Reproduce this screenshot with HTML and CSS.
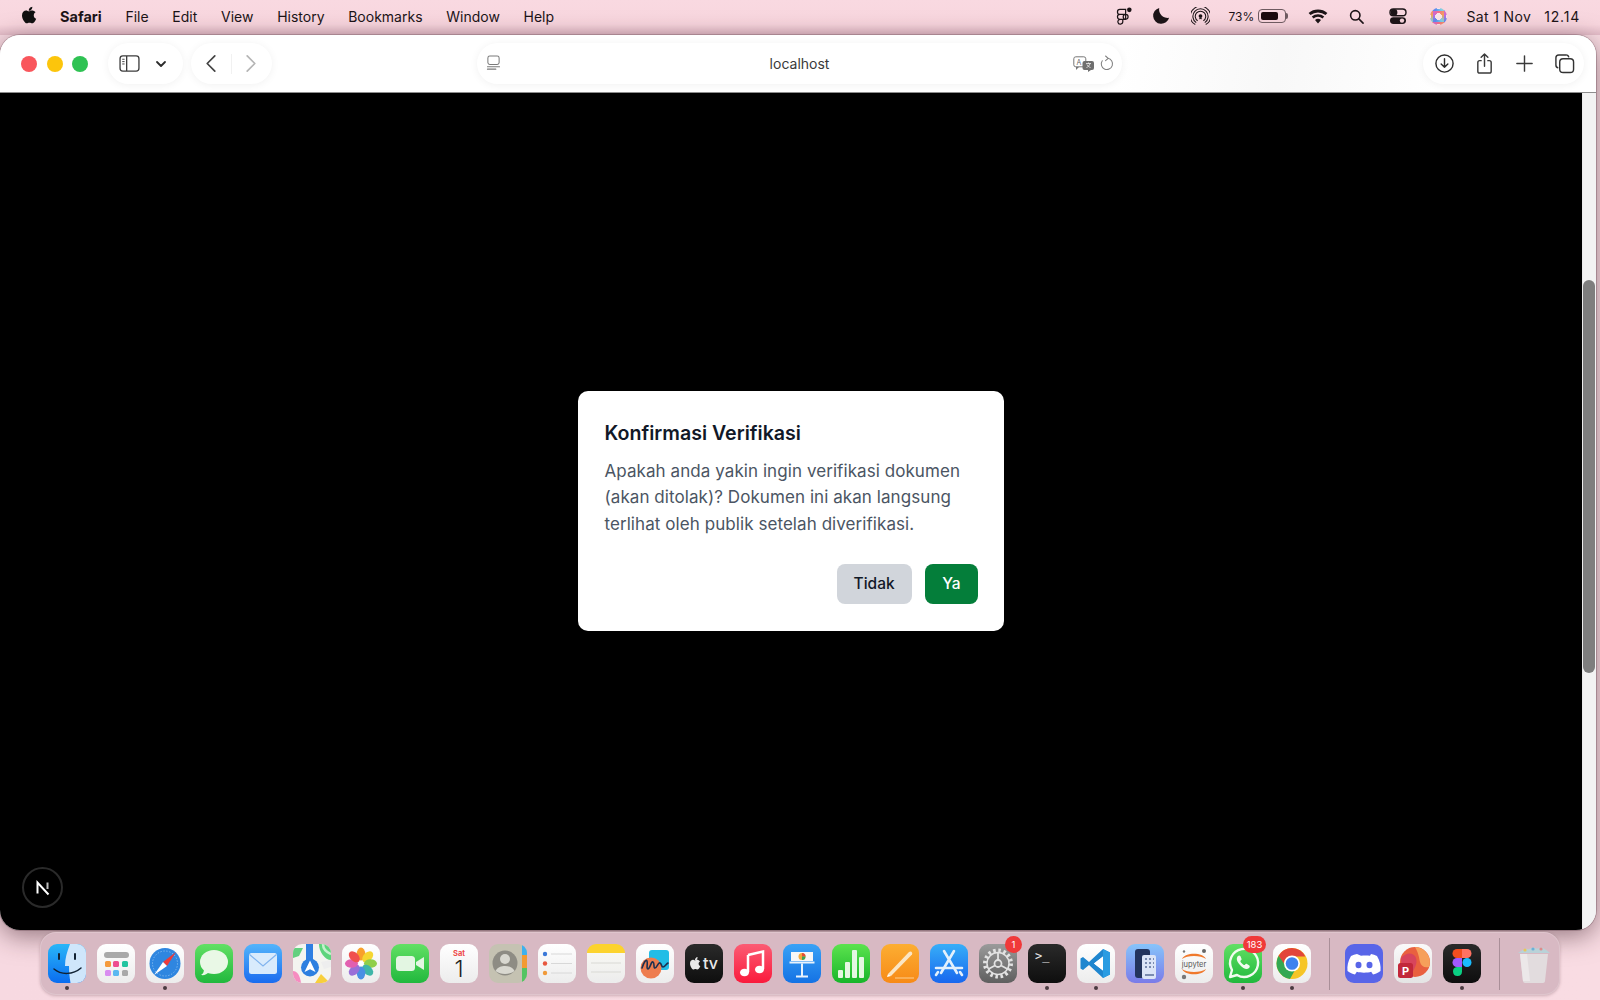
FILE: index.html
```html
<!DOCTYPE html>
<html lang="id">
<head>
    <meta charset="UTF-8">
    <title>localhost</title>
    <link rel="stylesheet" href="styles.css">
</head>
<body>
    <!-- menu bar -->
    <header class="menubar">
        <svg class="apple" viewBox="0 0 18 20"><path d="M12.4 0c.1 1.300-.4 2.500-1.100 3.400-.8.900-2 1.600-3.200 1.500-.1-1.200.5-2.500 1.200-3.300C10 .7 11.300.1 12.400 0zM16.300 6.800c-1.400.9-2.200 2.100-2.200 3.700 0 1.900 1.100 3.200 2.900 3.900-.4 1.200-1 2.300-1.700 3.300-.9 1.300-1.800 2.300-3.100 2.300-1.300 0-1.700-.8-3.300-.8-1.500 0-2 .8-3.200.8-1.300 0-2.200-1.100-3.200-2.500C1 15.600 0 13 0 10.600c0-3.900 2.500-5.900 5-5.900 1.300 0 2.400.9 3.200.9.800 0 2-.9 3.500-.9 1.900 0 3.500.8 4.600 2.100z"/></svg>
        <nav class="menu">
            <span class="menu-app">Safari</span>
            <span>File</span>
            <span>Edit</span>
            <span>View</span>
            <span>History</span>
            <span>Bookmarks</span>
            <span>Window</span>
            <span>Help</span>
        </nav>
        <div class="status">
            <svg class="st-figma" viewBox="0 0 22 22" fill="none" stroke="#1c1417" stroke-width="1.500"><path d="M6 3h7v6H6a3 3 0 0 1 0-6zM6 9h7v6H6a3 3 0 0 1 0-6zM6 15h3.500v2.500a3 3 0 1 1-3.500-2.500zM13 9a3 3 0 1 1 0 6 3 3 0 0 1 0-6z"/><circle cx="17.500" cy="3.500" r="2.800" fill="#1c1417" stroke="none"/></svg>
            <svg class="st-moon" viewBox="0 0 20 20"><path d="M8 1a9 9 0 1 0 11 11A9.500 9.500 0 0 1 8 1z" fill="#1c1417"/></svg>
            <svg class="st-air" viewBox="0 0 20 20" fill="none" stroke="#1c1417" stroke-width="1.100"><circle cx="10" cy="9.500" r="2" fill="#1c1417" stroke="none"/><path d="M7 14.500a5.500 5.500 0 1 1 6 0M5.500 16.500a8 8 0 1 1 9 0M4.500 18.500a10 10 0 0 1-1-17 9.500 9.500 0 0 1 13 0 10 10 0 0 1-1 17"/><path d="M8.500 12.500a3.300 3.300 0 0 1 3 0"/></svg>
            <span class="st-pct">73%</span>
            <span class="battery"><span class="battery-fill"></span></span>
            <svg class="st-wifi" viewBox="0 0 20 15"><path d="M10 14.500l-3-3.400a4.500 4.500 0 0 1 6 0zM5.500 9.500L3.800 7.600a9.500 9.500 0 0 1 12.400 0L14.500 9.500a7 7 0 0 0-9 0zM2.500 6.100L.6 4a14.500 14.500 0 0 1 18.800 0l-1.900 2.100a12 12 0 0 0-15 0z" fill="#1c1417"/></svg>
            <svg class="st-search" viewBox="0 0 16 16" fill="none" stroke="#1c1417" stroke-width="1.700"><circle cx="6.700" cy="6.700" r="5"/><path d="M10.500 10.500L15 15" stroke-linecap="round"/></svg>
            <svg class="st-control" viewBox="0 0 18 17"><rect x="1" y="1" width="16" height="6.800" rx="3.400" fill="none" stroke="#1c1417" stroke-width="1.400"/><circle cx="5" cy="4.400" r="3.400" fill="#1c1417"/><rect x="1" y="9.200" width="16" height="6.800" rx="3.400" fill="#1c1417"/><circle cx="13" cy="12.600" r="2.200" fill="#f6d3dc"/></svg>
            <span class="siri"></span>
            <span class="st-date">Sat 1 Nov</span>
            <span class="st-time">12.14</span>
        </div>
    </header>

    <!-- safari window -->
    <main class="window">
        <div class="toolbar">
            <div class="lights">
                <span class="light light-red"></span>
                <span class="light light-yellow"></span>
                <span class="light light-green"></span>
            </div>
            <div class="pill pill-side">
                <svg class="tb-side" viewBox="0 0 22 18" fill="none" stroke="#3c3c3c" stroke-width="1.400"><rect x="1" y="1" width="20" height="16" rx="3"/><path d="M8 1v16"/><path d="M3.300 4.500h2.500M3.300 7h2.500M3.300 9.500h2.500" stroke-width="1"/></svg>
                <svg class="tb-chev" viewBox="0 0 12 8" fill="none" stroke="#2c2c2c" stroke-width="1.800" stroke-linecap="round" stroke-linejoin="round"><path d="M2 2l4 4 4-4"/></svg>
            </div>
            <div class="pill pill-nav">
                <svg class="tb-arrow" viewBox="0 0 12 20" fill="none" stroke="#444" stroke-width="1.800" stroke-linecap="round" stroke-linejoin="round"><path d="M10 2L2 10l8 8"/></svg>
                <span class="nav-sep"></span>
                <svg class="tb-arrow" viewBox="0 0 12 20" fill="none" stroke="#b5b5b5" stroke-width="1.800" stroke-linecap="round" stroke-linejoin="round"><path d="M2 2l8 8-8 8"/></svg>
            </div>
            <div class="pill url">
                <svg class="url-page" viewBox="0 0 16 18" fill="none" stroke="#7a7a7a" stroke-width="1.100"><rect x="2" y="1" width="12" height="9" rx="2"/><path d="M1.500 12.500h13M1.500 15h9" stroke-linecap="round"/></svg>
                <span class="url-text">localhost</span>
                <svg class="url-trans" viewBox="0 0 22 16"><rect x=".8" y=".8" width="12" height="10" rx="2" fill="#fff" stroke="#777" stroke-width="1"/><path d="M3 11v3l3-3z" fill="#777"/><text class="url-trans-a" x="3.600" y="8.500">A</text><rect x="9.500" y="5" width="11.500" height="9" rx="2" fill="#6f6f6f"/><path d="M15 14v2l3-2z" fill="#6f6f6f"/><path d="M13 7.500h5M15.500 6.500v1M17 7.500c-.5 2-2 3.500-3.500 4M14 8.500c.5 1.500 2 2.500 3.500 3" stroke="#fff" stroke-width=".7" fill="none"/></svg>
                <svg class="url-reload" viewBox="0 0 16 18" fill="none" stroke="#7f7f7f" stroke-width="1.100" stroke-linecap="round" stroke-linejoin="round"><path d="M9.500 3.500a6 6 0 1 1-6 2.500"/><path d="M7 1l2.800 2.500L7 6"/></svg>
            </div>
            <div class="pill pill-actions">
                <svg class="tb-act" viewBox="0 0 22 22" fill="none" stroke="#2f2f2f" stroke-width="1.500" stroke-linecap="round" stroke-linejoin="round"><circle cx="11" cy="11" r="9"/><path d="M11 6v9M7.500 11.500L11 15l3.500-3.500"/></svg>
                <svg class="tb-act" viewBox="0 0 22 22" fill="none" stroke="#3a3a3a" stroke-width="1.500" stroke-linecap="round" stroke-linejoin="round"><path d="M7.500 8H6a2 2 0 0 0-2 2v9a2 2 0 0 0 2 2h10a2 2 0 0 0 2-2v-9a2 2 0 0 0-2-2h-1.500M11 14V1M7.500 4.500L11 1l3.500 3.500"/></svg>
                <svg class="tb-act" viewBox="0 0 22 22" fill="none" stroke="#3a3a3a" stroke-width="1.500" stroke-linecap="round"><path d="M11 3v16M3 11h16"/></svg>
                <svg class="tb-act" viewBox="0 0 22 22" fill="none" stroke="#333" stroke-width="1.500"><path d="M4.500 15.500A3 3 0 0 1 2 12.500V5a3 3 0 0 1 3-3h7.500a3 3 0 0 1 3 2.500"/><rect x="6" y="6" width="14.500" height="14.500" rx="3.500"/></svg>
            </div>
        </div>

        <div class="viewport">
            <section class="page">
                <div class="dialog">
                    <h2>Konfirmasi Verifikasi</h2>
                    <p>Apakah anda yakin ingin verifikasi dokumen (akan ditolak)? Dokumen ini akan langsung terlihat oleh publik setelah diverifikasi.</p>
                    <div class="dialog-actions">
                        <button class="btn btn-no">Tidak</button>
                        <button class="btn btn-yes">Ya</button>
                    </div>
                </div>
                <div class="next-badge">
                    <svg viewBox="0 0 18 18" fill="none" stroke-width="2"><path d="M3.500 14.500V3.500L14.500 15.500" stroke="#fff"/><path d="M13.500 3.500v6.500" stroke="#bdbdbd"/></svg>
                </div>
            </section>
            <div class="scrollbar"><div class="scroll-thumb"></div></div>
        </div>
    </main>

    <!-- dock -->
    <footer class="dock">
        <div class="app running"><div class="icon i-finder"><svg viewBox="0 0 38 39"><path d="M22 0c-3 8-5 14-5 22h4c0 6 .5 11 1.500 17H38V0z" fill="#cfe6fb"/><path d="M11 10v5M27 10v5" stroke="#123" stroke-width="2" stroke-linecap="round"/><path d="M6 25c7 6 19 6 27-1" fill="none" stroke="#123" stroke-width="1.500" stroke-linecap="round"/></svg></div></div>
        <div class="app"><div class="icon i-light"><svg viewBox="0 0 38 39"><rect x="7" y="8" width="25" height="6" rx="3" fill="#a9a9a9"/><rect x="8" y="17" width="6" height="6" rx="1.500" fill="#f59a3c"/><rect x="16" y="17" width="6" height="6" rx="1.500" fill="#ee4d8f"/><rect x="25" y="17" width="6" height="6" rx="1.500" fill="#23c4a0"/><rect x="8" y="26" width="6" height="6" rx="1.500" fill="#d98cf0"/><rect x="16" y="26" width="6" height="6" rx="1.500" fill="#5ab8f0"/><rect x="25" y="26" width="6" height="6" rx="1.500" fill="#a9a9a9"/></svg></div></div>
        <div class="app running"><div class="icon i-light"><svg viewBox="0 0 38 39"><circle cx="19" cy="19.500" r="15.500" fill="#2f86e0"/><circle cx="19" cy="19.500" r="12.500" fill="none" stroke="#9cc9f2" stroke-width="1" stroke-dasharray="1 2"/><path d="M30 8L21 22l-4-4z" fill="#ec3b3b"/><path d="M8 31l9-13 4 4z" fill="#fff"/></svg></div></div>
        <div class="app"><div class="icon i-messages"><svg viewBox="0 0 38 39"><ellipse cx="19" cy="18" rx="14" ry="12" fill="#e9f8e6"/><path d="M9 25c0 3-1 5-3 6 3 .5 6-.5 8-3z" fill="#e9f8e6"/></svg></div></div>
        <div class="app"><div class="icon i-mail"><svg viewBox="0 0 38 39"><rect x="5" y="9" width="28" height="21" rx="2.500" fill="#d8ebfc"/><path d="M5.500 10.500L19 22l13.500-11.500" fill="none" stroke="#80b4ee" stroke-width="1.200"/></svg></div></div>
        <div class="app"><div class="icon i-maps"><svg viewBox="0 0 38 39"><path d="M26 0h12v16c-6 0-12-8-12-16z" fill="#5ed47c"/><path d="M30 0c0 4 3 8 8 10" fill="none" stroke="#c5f0cd" stroke-width="2.500"/><path d="M0 4h10L6 12 0 14z" fill="#63d07f"/><path d="M13 0h7v16h-7z" fill="#2f7fe2"/><path d="M0 27c4 0 7 4 8 12H0z" fill="#f68cc0"/><path d="M22 39l6-9 7 7v2z" fill="#f8cf3c"/><path d="M28 18l10-2v7l-7 2z" fill="#eee"/><circle cx="17" cy="23.500" r="9" fill="#2d7fe0"/><path d="M17 16.500l5.500 11.500-5.500-2.800L11.500 28z" fill="#fff"/></svg></div></div>
        <div class="app"><div class="icon i-light"><svg viewBox="0 0 38 39"><g transform="translate(19 19.500)"><ellipse cy="-9.500" rx="4.300" ry="6.500" fill="#f8a02c"/><ellipse cy="-9.500" rx="4.300" ry="6.500" fill="#f5d631" transform="rotate(45)"/><ellipse cy="-9.500" rx="4.300" ry="6.500" fill="#8fcf4a" transform="rotate(90)"/><ellipse cy="-9.500" rx="4.300" ry="6.500" fill="#3fb6a8" transform="rotate(135)"/><ellipse cy="-9.500" rx="4.300" ry="6.500" fill="#4a8fe4" transform="rotate(180)"/><ellipse cy="-9.500" rx="4.300" ry="6.500" fill="#9a6fd8" transform="rotate(225)"/><ellipse cy="-9.500" rx="4.300" ry="6.500" fill="#e25fb0" transform="rotate(270)"/><ellipse cy="-9.500" rx="4.300" ry="6.500" fill="#f0504e" transform="rotate(315)"/><circle r="2.500" fill="#fff"/></g></svg></div></div>
        <div class="app"><div class="icon i-messages"><svg viewBox="0 0 38 39"><rect x="5" y="12" width="19" height="15" rx="3.500" fill="#e3f6e2"/><path d="M25 18l8-5v13l-8-5z" fill="#e3f6e2"/></svg></div></div>
        <div class="app"><div class="icon i-light"><span class="cal-day">Sat</span><span class="cal-num">1</span></div></div>
        <div class="app"><div class="icon i-contacts"><svg viewBox="0 0 38 39"><path d="M33 0h5v11h-5z" fill="#3db1ee"/><path d="M33 11h5v13h-5z" fill="#f39a32"/><path d="M33 24h5v15h-5z" fill="#54c463"/><circle cx="16" cy="19" r="12.500" fill="#8e8c84"/><circle cx="16" cy="15" r="5" fill="#d9d8d0"/><path d="M6.500 27c2-4 6-5 9.500-5s7.500 1 9.500 5c-5 4-14 4-19 0z" fill="#d9d8d0"/></svg></div></div>
        <div class="app"><div class="icon i-light"><svg viewBox="0 0 38 39"><circle cx="7" cy="10" r="2.200" fill="#3b78d8"/><circle cx="7" cy="19.500" r="2.200" fill="#e7573f"/><circle cx="7" cy="29" r="2.200" fill="#f09a3a"/><path d="M13 10h21M13 19.500h21M13 29h21" stroke="#d8d8d8" stroke-width="1"/></svg></div></div>
        <div class="app"><div class="icon i-notes"><svg viewBox="0 0 38 39"><path d="M4 19h30M4 28h30" stroke="#d9d9d4" stroke-width="1"/></svg></div></div>
        <div class="app"><div class="icon i-light"><svg viewBox="0 0 38 39"><rect x="13" y="6" width="20" height="20" rx="3" fill="#22bde6"/><circle cx="15" cy="24" r="10.500" fill="#ee7d4f"/><path d="M6 24c2-6 4-9 5-7s-1 8 1 8 3-8 5-7 0 6 2 6 3-6 5-5 1 4 3 4 3-3 5-4" fill="none" stroke="#1d3050" stroke-width="1.600" stroke-linecap="round"/></svg></div></div>
        <div class="app"><div class="icon i-dark tv-icon"><svg viewBox="0 0 12 14" class="tv-apple"><path d="M8.300 0c.1.900-.3 1.700-.7 2.300-.5.600-1.300 1-2.100 1-.1-.8.300-1.700.8-2.200C6.700.5 7.600.1 8.300 0zM10.900 4.700c-.9.600-1.500 1.400-1.500 2.500 0 1.300.8 2.100 1.900 2.600-.3.800-.7 1.500-1.100 2.200-.6.900-1.200 1.500-2.100 1.500-.9 0-1.100-.5-2.200-.5-1 0-1.300.5-2.100.5-.9 0-1.500-.7-2.100-1.700C.7 10.400 0 8.700 0 7c0-2.600 1.700-4 3.300-4 .9 0 1.600.6 2.100.6.500 0 1.300-.6 2.300-.6 1.300 0 2.400.6 3.200 1.700z" fill="#e8e8e8"/></svg><span>tv</span></div></div>
        <div class="app"><div class="icon i-music"><svg viewBox="0 0 38 39"><path d="M14 11l15-3.500V25" fill="none" stroke="#fff" stroke-width="2.500"/><path d="M14 11v17" stroke="#fff" stroke-width="2.500"/><ellipse cx="10.500" cy="28.500" rx="4.500" ry="3.800" fill="#fff"/><ellipse cx="25.500" cy="25.500" rx="4.500" ry="3.800" fill="#fff"/></svg></div></div>
        <div class="app"><div class="icon i-keynote"><svg viewBox="0 0 38 39"><path d="M8 8h22v9H8z" fill="#f7f7f7"/><circle cx="19" cy="12.500" r="3.500" fill="#f2a93c"/><path d="M19 9a3.500 3.500 0 0 1 3.500 3.500H19z" fill="#e24c3c"/><path d="M19 12.500h3.500A3.500 3.500 0 0 1 19 16z" fill="#3aa655"/><path d="M6.500 17.500h25v2h-25z" fill="#e8f2fc"/><path d="M19 19.500V32" stroke="#e8f2fc" stroke-width="2"/><path d="M13 32.500h12" stroke="#e8f2fc" stroke-width="2"/></svg></div></div>
        <div class="app"><div class="icon i-numbers"><svg viewBox="0 0 38 39"><rect x="6" y="26" width="5" height="8" rx="1" fill="#e5f7e2"/><rect x="13" y="18" width="5" height="16" rx="1" fill="#e5f7e2"/><rect x="20" y="6" width="5" height="28" rx="1" fill="#e5f7e2"/><rect x="27" y="13" width="5" height="21" rx="1" fill="#e5f7e2"/></svg></div></div>
        <div class="app"><div class="icon i-pages"><svg viewBox="0 0 38 39"><path d="M7 30L28 8c2-1.500 4 .5 3 2.500L10 32z" fill="#fbe6c4"/><path d="M6 33l1-3 3 2z" fill="#fff"/><path d="M14 34h19" stroke="#fcd091" stroke-width="1.200"/></svg></div></div>
        <div class="app"><div class="icon i-store"><svg viewBox="0 0 38 39" fill="none" stroke="#e3f0fc" stroke-width="2.600" stroke-linecap="round"><path d="M14 7l13 22M24 7L11 29M6 24h26"/><path d="M6 31l2-3M32 31l-2-3"/></svg></div></div>
        <div class="app"><div class="icon i-settings"><svg viewBox="0 0 38 39" fill="none" stroke="#e2e2e2"><circle cx="19" cy="19.500" r="13" stroke-width="4" stroke-dasharray="2.500 2.600"/><circle cx="19" cy="19.500" r="11" stroke-width="1.500"/><circle cx="19" cy="19.500" r="3.500" stroke-width="1.800"/><path d="M19 16V8.500M16 21.500L9.500 25M22 21.500l6.500 3.500" stroke-width="1.800"/></svg></div><span class="badge">1</span></div>
        <div class="app running"><div class="icon i-dark term-icon">&gt;_</div></div>
        <div class="app running"><div class="icon i-light"><svg viewBox="0 0 38 39"><path d="M26 5l7 3.500v22L26 34 12 21l-6 5-2.500-1.500v-10L6 13l6 5z" fill="#1f86cf"/><path d="M26 12.500v14L17 19.500z" fill="#fff"/><path d="M26 5l7 3.500v22L26 34z" fill="#2a9ce2"/><path d="M26 12.500v14L17 19.500z" fill="#fff"/></svg></div></div>
        <div class="app"><div class="icon i-sim"><svg viewBox="0 0 38 39"><rect x="9" y="5" width="15" height="29" rx="3" fill="#23345e"/><rect x="16" y="11" width="14" height="24" rx="2" fill="#dbe4f7"/><path d="M19 15h2M23 15h2M27 15h1M19 19h2M23 19h2M27 19h1M19 23h2M23 23h2M27 23h1M19 31h9" stroke="#7a8bb0" stroke-width="2"/></svg></div></div>
        <div class="app"><div class="icon i-light"><svg viewBox="0 0 38 39"><path d="M7 15c3-7 21-7 24 0-5-4-19-4-24 0z" fill="#f0792c"/><path d="M7 25c3 7 21 7 24 0-5 4-19 4-24 0z" fill="#f0792c"/><circle cx="29" cy="7" r="2" fill="#666"/><circle cx="9" cy="33" r="2.200" fill="#777"/><circle cx="9" cy="7.500" r="1.200" fill="#777"/><text class="jupyter-text" x="19" y="22.500">jupyter</text></svg></div></div>
        <div class="app running"><div class="icon i-messages"><svg viewBox="0 0 38 39"><path d="M6 33l2-7a14 14 0 1 1 5 5z" fill="none" stroke="#f2fbf0" stroke-width="2.400" stroke-linejoin="round"/><path d="M14 12c-2 2-1.500 5 2 9s7 5 9 3c1-1 1-2 0-2.700l-2-1.300c-1-.5-1.500 0-2 .7-.5.6-1.300.4-3-1.300s-2-2.500-1.300-3c.7-.5 1.200-1 .7-2L16.500 12.200c-.7-1-1.700-1-2.500-.2z" fill="#f2fbf0"/></svg></div><span class="badge badge-wide">183</span></div>
        <div class="app running"><div class="icon i-light"><svg viewBox="0 0 38 39"><circle cx="19" cy="19.500" r="15.500" fill="#f6c526"/><path d="M19 4A15.500 15.500 0 0 0 5.600 11.700l7 12.300a7 7 0 0 1 6.400-11.500h13.400A15.500 15.500 0 0 0 19 4z" fill="#e2453a"/><path d="M5.600 11.700A15.500 15.500 0 0 0 17 34.900l6.700-11.800a7 7 0 0 1-11-1z" fill="#34a853"/><circle cx="19" cy="19.500" r="8" fill="#fff"/><circle cx="19" cy="19.500" r="6.300" fill="#3e82ee"/></svg></div></div>
        <div class="dock-sep"></div>
        <div class="app"><div class="icon i-discord"><svg viewBox="0 0 38 39"><path d="M12 10c-2 .4-4 1-6 2-3 5-4 10-3.500 15 2.500 2 5 3 7.500 3.500l1.800-2.700c3.600 1.200 10.800 1.200 14.400 0l1.800 2.700c2.500-.5 5-1.500 7.500-3.500.5-5-.5-10-3.500-15-2-1-4-1.600-6-2l-1 1.800c-3-.5-6-.5-9 0z" fill="#fff"/><ellipse cx="13.500" cy="21" rx="3" ry="3.300" fill="#5865e8"/><ellipse cx="24.500" cy="21" rx="3" ry="3.300" fill="#5865e8"/></svg></div></div>
        <div class="app"><div class="icon i-ppt"><svg viewBox="0 0 38 39"><circle cx="21" cy="18" r="15" fill="#e9603f"/><path d="M21 3a15 15 0 0 1 14 20c-5 1-8-1-9-5s-1-8-5-15z" fill="#f6a05a"/><path d="M7 14c5-6 13-6 15 0s-2 11-6 19c-6-3-9-10-9-19z" fill="#d8445c"/><rect x="4" y="19" width="15" height="15" rx="2.500" fill="#c2273a"/><text class="ppt-text" x="11.500" y="30.500">P</text></svg></div></div>
        <div class="app running"><div class="icon i-dark"><svg viewBox="0 0 38 39"><path d="M19 5h-5a4.500 4.500 0 0 0 0 9h5z" fill="#f24e1e"/><path d="M19 5h5a4.500 4.500 0 0 1 0 9h-5z" fill="#ff7262"/><path d="M19 14h-5a4.500 4.500 0 0 0 0 9h5z" fill="#a259ff"/><circle cx="24" cy="18.500" r="4.500" fill="#1abcfe"/><path d="M14 23h5v4.500a4.500 4.500 0 1 1-5-4.500z" fill="#0acf83"/></svg></div></div>
        <div class="dock-sep"></div>
        <div class="app"><div class="icon i-trash"><svg viewBox="0 0 38 39"><path d="M5 10l3 27c0 1 1 2 2 2h18c1 0 2-1 2-2l3-27z" fill="#e2dcde"/><path d="M5 10l3 27h7L12 10z" fill="#ece8e9"/><path d="M3 9c4-2 6-5 9-4s5-3 8-1 5-2 8 0 5 3 7 5z" fill="#b9d2d8"/><circle cx="10" cy="6" r="1.600" fill="#e9c65a"/><circle cx="18" cy="5" r="1.600" fill="#6cb0d8"/><circle cx="26" cy="5" r="1.600" fill="#df8c8c"/></svg></div></div>
    </footer>
</body>
</html>
```

FILE: styles.css
```css
* {
    box-sizing: border-box;
}
html, body {
    margin: 0;
    height: 100%;
}
body {
    width: 1600px;
    height: 1000px;
    overflow: hidden;
    display: flex;
    flex-direction: column;
    font-family: Inter, "Liberation Sans", sans-serif;
    background: linear-gradient(90deg, #f7d9e1 0%, #f8dbe2 50%, #f9dce3 100%);
    color: #1c1417;
}

/* menu bar */
.menubar {
    height: 35px;
    flex: none;
    display: flex;
    align-items: center;
    padding: 0 20px 3px 22px;
    font-size: 14px;
    background: linear-gradient(#f9d9e1 0%, #f8d6de 70%, #e3bcc8 100%);
}
.apple {
    width: 15px;
    height: 18px;
    margin-right: 23px;
    margin-bottom: 2px;
    fill: #111;
}
.menu {
    display: flex;
    gap: 23.700px;
}
.menu-app {
    font-size: 14.500px;
    font-weight: 700;
}
.status {
    margin-left: auto;
    display: flex;
    align-items: center;
}
.st-figma { width: 18px; height: 18px; margin-right: 19px; }
.st-moon { width: 18px; height: 18px; margin-right: 21px; }
.st-air { width: 19px; height: 19px; margin-right: 19px; }
.st-pct { font-size: 12px; width: 27px; margin-right: 2px; }
.battery {
    width: 28px;
    height: 14px;
    margin-right: 22px;
    border: 1px solid #6e5a60;
    border-radius: 4px;
    padding: 2px;
    position: relative;
}
.battery::after {
    content: "";
    position: absolute;
    right: -3px;
    top: 3px;
    width: 2px;
    height: 6px;
    background: #6e5a60;
    border-radius: 0 2px 2px 0;
}
.battery-fill {
    display: block;
    width: 17px;
    height: 100%;
    background: #1c0a0e;
    border-radius: 2px;
}
.st-wifi { width: 20px; height: 15px; margin-right: 21px; }
.st-search { width: 15px; height: 15px; margin-right: 25px; }
.st-control { width: 18px; height: 17px; margin-right: 23px; }
.siri {
    width: 17px;
    height: 17px;
    margin-right: 20px;
    border-radius: 50%;
    border: 3px solid transparent;
    background: radial-gradient(circle, #fbe6ea 0 45%, transparent 46%),
        conic-gradient(#f76c8c, #f2a65a, #7fd0e8, #5a8df0, #c56be0, #f76c8c);
}
.st-date {
    margin-right: 13px;
    letter-spacing: .35px;
}
.st-time {
    letter-spacing: .8px;
}

/* safari window */
.window {
    height: 895px;
    flex: none;
    margin-right: 4px;
    display: flex;
    flex-direction: column;
    border-radius: 20px;
    overflow: hidden;
    background: #f7f7f7;
    box-shadow: 0 6px 26px rgba(50, 20, 30, .5), 0 0 0 1px rgba(120, 90, 100, .35);
}
.toolbar {
    height: 58px;
    flex: none;
    display: flex;
    align-items: center;
    padding: 0 12px 0 21px;
    background: linear-gradient(100deg, #fff 0%, #fff 70%, #f8f8f8 80%, #fff 90%);
    border-bottom: 1px solid #8d8d8d;
}
.lights {
    display: flex;
    gap: 9.500px;
    margin-right: 20px;
}
.light {
    width: 16px;
    height: 16px;
    border-radius: 50%;
}
.light-red { background: #f9565c; }
.light-yellow { background: #fcc50c; }
.light-green { background: #2fc253; }
.pill {
    height: 41px;
    display: flex;
    align-items: center;
    background: #fff;
    border-radius: 21px;
    box-shadow: 0 1px 8px rgba(0, 0, 0, .06);
}
.pill-side {
    width: 75px;
    padding-left: 11px;
    margin-right: 8px;
}
.tb-side { width: 21px; height: 17px; margin-right: 15px; }
.tb-chev { width: 12px; height: 8px; }
.pill-nav {
    width: 81px;
    padding-left: 14px;
    margin-right: 205px;
}
.tb-arrow { width: 12px; height: 19px; }
.nav-sep {
    width: 1px;
    height: 20px;
    margin: 0 13px 0 14px;
    background: #f1f1f1;
}
.url {
    width: 647px;
    padding: 0 8px 0 9px;
    margin-right: 301px;
    position: relative;
}
.url-page { width: 15px; height: 17px; }
.url-text {
    position: absolute;
    left: 0;
    right: 0;
    text-align: center;
    font-size: 14px;
    color: #3a3a3a;
}
.url-trans {
    width: 22px;
    height: 16px;
    margin-left: auto;
    margin-right: 4px;
}
.url-trans-a {
    font-size: 7px;
    fill: #666;
}
.url-reload { width: 15px; height: 17px; }
.pill-actions {
    width: 161px;
    padding: 0 9px 0 11px;
    justify-content: space-between;
}
.tb-act { width: 21px; height: 21px; }

/* page content */
.viewport {
    flex: 1;
    display: flex;
    min-height: 0;
}
.page {
    flex: 1;
    background: #000;
    display: flex;
    align-items: center;
    justify-content: center;
    position: relative;
}
.dialog {
    width: 426px;
    height: 240px;
    margin-bottom: 2px;
    padding: 28px 26px 26px 26.500px;
    background: #fff;
    border-radius: 10px;
}
.dialog h2 {
    margin: 0 0 11px;
    font-size: 19.600px;
    line-height: 28px;
    font-weight: 600;
    color: #111827;
}
.dialog p {
    margin: 0;
    font-size: 17px;
    line-height: 26.700px;
    letter-spacing: .07px;
    color: #4b5563;
}
.dialog-actions {
    margin-top: 26px;
    display: flex;
    justify-content: flex-end;
    gap: 13px;
}
.btn {
    height: 40px;
    border: none;
    border-radius: 8px;
    font-family: inherit;
    font-size: 15.500px;
    font-weight: 500;
    padding: 0 17px;
}
.btn-no {
    background: #d1d5db;
    color: #111827;
}
.btn-yes {
    padding: 0 17.500px;
    background: #047e3a;
    color: #fff;
}
.next-badge {
    position: absolute;
    left: 22px;
    bottom: 22px;
    width: 41px;
    height: 41px;
    display: flex;
    align-items: center;
    justify-content: center;
    background: #000;
    border: 2px solid #2a2a2a;
    border-radius: 50%;
}
.next-badge svg {
    width: 18px;
    height: 18px;
}
.scrollbar {
    width: 14px;
    flex: none;
    padding-top: 187px;
    background: #f3f3f3;
    border-left: 1px solid #ececec;
}
.scroll-thumb {
    width: 12px;
    height: 393px;
    background: #7e7e7e;
    border-radius: 6px;
}

/* dock */
.dock {
    width: 1520px;
    height: 63px;
    margin: 2px 0 0 40px;
    padding: 12px 0 0 8px;
    display: flex;
    gap: 11px;
    flex: none;
    background: #d8b9c3;
    border-radius: 16px;
    box-shadow: inset 0 0 0 1px rgba(255, 255, 255, .18), 0 1px 3px rgba(80, 40, 50, .25);
}
.app {
    width: 38px;
    height: 39px;
    flex: none;
    position: relative;
}
.running::after {
    content: "";
    position: absolute;
    left: 17px;
    bottom: -7px;
    width: 4px;
    height: 4px;
    border-radius: 50%;
    background: #4a3a40;
}
.icon {
    width: 38px;
    height: 39px;
    border-radius: 9px;
    overflow: hidden;
    display: flex;
    flex-direction: column;
    align-items: center;
}
.icon svg {
    width: 38px;
    height: 39px;
    display: block;
}
.i-finder { background: linear-gradient(#29b6f8, #0a6cf0); }
.i-light { background: linear-gradient(#fff, #ececec); }
.i-dark { background: linear-gradient(#2a2a2a, #0e0e0e); }
.i-messages { background: linear-gradient(#62e064, #21b83d); }
.i-mail { background: linear-gradient(#53b4fb, #1a6cef); }
.i-maps { background: #f4f4f0; }
.i-contacts { background: #c5c2b2; }
.i-notes { background: linear-gradient(#fcd32e 0 24%, #f7f7f3 24%, #ececec 100%); }
.i-music { background: linear-gradient(#fb5c74, #fa1a3c); }
.i-keynote { background: linear-gradient(#3aa2f6, #1472e4); }
.i-numbers { background: linear-gradient(#5ce34e, #17b52a); }
.i-pages { background: linear-gradient(#fcae32, #f78a17); }
.i-store { background: linear-gradient(#37aef8, #1867ee); }
.i-settings { background: linear-gradient(#9a9a9a, #5f5f5f); }
.i-sim { background: linear-gradient(#86c4fb, #7a7be8); }
.i-discord { background: #5865e8; }
.i-ppt { background: linear-gradient(#fafafa, #e4e4e4); }
.i-trash { background: transparent; }
.cal-day {
    margin-top: 5px;
    font-size: 7.500px;
    line-height: 9px;
    font-weight: 700;
    color: #ee4b4b;
}
.cal-num {
    font-size: 23px;
    line-height: 23px;
    font-weight: 300;
    color: #222;
}
.tv-icon {
    flex-direction: row;
    justify-content: center;
    gap: 2px;
    color: #e8e8e8;
    font-size: 16px;
    font-weight: 500;
    line-height: 39px;
}
.icon .tv-apple {
    width: 11px;
    height: 13px;
    align-self: center;
}
.term-icon {
    align-items: flex-start;
    padding: 4px 0 0 7px;
    color: #e9e9e9;
    font-family: "DejaVu Sans Mono", monospace;
    font-size: 12px;
    line-height: 16px;
}
.jupyter-text {
    font-size: 7.500px;
    text-anchor: middle;
    fill: #555;
}
.ppt-text {
    font-size: 11px;
    font-weight: 700;
    text-anchor: middle;
    fill: #fff;
}
.badge {
    position: absolute;
    right: -5px;
    top: -8px;
    min-width: 17px;
    height: 17px;
    padding: 0 3px;
    border-radius: 9px;
    background: #f0393a;
    color: #fff;
    font-size: 9.500px;
    line-height: 17px;
    text-align: center;
}
.badge-wide {
    right: -4px;
    width: 23px;
}
.dock-sep {
    width: 1px;
    height: 52px;
    margin: -6px 4px 0 7px;
    flex: none;
    background: #a98f98;
}
```
